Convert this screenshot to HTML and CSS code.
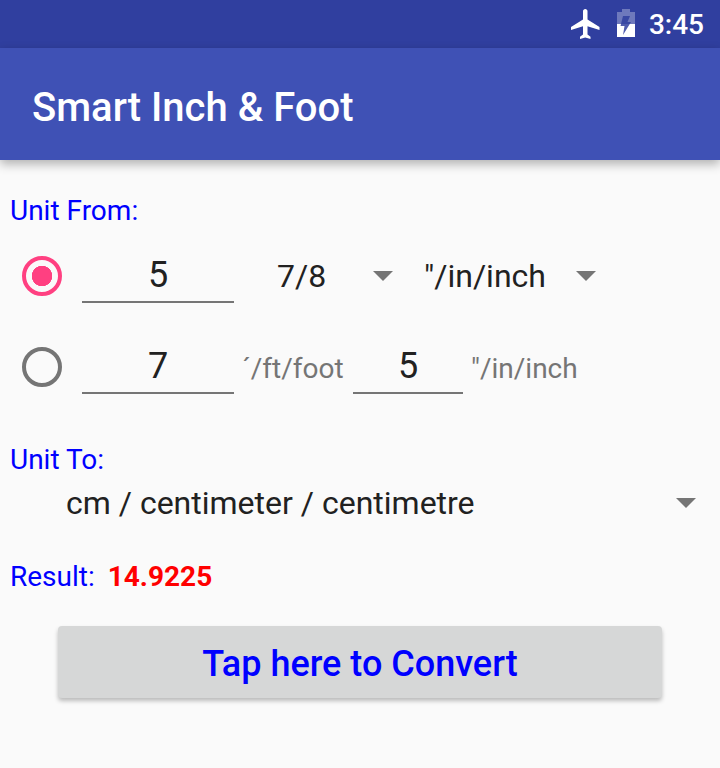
FILE: index.html
```html
<!DOCTYPE html>
<html lang="en">
<head>
  <meta charset="UTF-8">
  <meta name="viewport" content="width=device-width, initial-scale=1.0">
  <title>Smart Inch &amp; Foot</title>
  <link rel="stylesheet" href="styles.css">
</head>
<body>

  <!-- Status bar -->
  <div class="status-bar">
    <svg class="plane" viewBox="0 0 24 24"><path d="M21 16v-2l-8-5V3.500C13 2.670 12.330 2 11.500 2S10 2.670 10 3.500V9l-8 5v2l8-2.500V19l-2 1.500V22l3.500-1 3.500 1v-1.500L13 19v-5.500l8 2.500z"/></svg>
    <svg class="battery" viewBox="0 0 20 28">
      <path class="battery-empty" d="M6 0h8v3h5v25H1V3h5z"/>
      <path d="M1 15h18v13H1z"/>
      <path class="battery-bolt" d="M7 7h7l-2.500 6H15L7 26l1.500-9H4.500z"/>
    </svg>
    <span class="clock">3:45</span>
  </div>

  <!-- App bar -->
  <div class="app-bar">Smart Inch &amp; Foot</div>

  <div class="content">
    <div class="label">Unit From:</div>

    <div class="row row-first">
      <span class="radio radio-on"></span>
      <span class="field field-wide">5</span>
      <span class="spinner spinner-fraction">7/8<i class="arrow"></i></span>
      <span class="spinner spinner-unit">"/in/inch<i class="arrow"></i></span>
    </div>

    <div class="row row-second">
      <span class="radio"></span>
      <span class="field field-wide">7</span>
      <span class="unit">´/ft/foot</span>
      <span class="field field-small">5</span>
      <span class="unit">"/in/inch</span>
    </div>

    <div class="label label-to">Unit To:</div>
    <div class="spinner spinner-to">cm / centimeter / centimetre<i class="arrow"></i></div>

    <div class="label label-result">Result: <b class="result">14.9225</b></div>

    <button class="button">Tap here to Convert</button>
  </div>

</body>
</html>
```

FILE: styles.css
```css
body {
  margin: 0;
  height: 768px;
  overflow: hidden;
  background: #fafafa;
  font-family: Roboto, sans-serif;
  color: #212121;
}

/* Status bar */
.status-bar {
  height: 48px;
  background: #303f9f;
  display: flex;
  align-items: center;
  justify-content: flex-end;
  padding-right: 16px;
  color: #fff;
}

.plane {
  width: 36px;
  height: 36px;
  fill: #fff;
  margin-right: 12px;
}

.battery {
  width: 20px;
  height: 28px;
  fill: #fff;
  margin: 0 13px 2px 0;
}

.battery-empty {
  opacity: 0.3;
}

.battery-bolt {
  fill: #303f9f;
  opacity: 0.85;
}

.clock {
  font-size: 28px;
  font-weight: 500;
}

/* App bar */
.app-bar {
  height: 112px;
  background: #3f51b5;
  color: #fff;
  font-size: 40px;
  font-weight: 500;
  line-height: 120px;
  padding-left: 32px;
  box-shadow: 0 4px 10px rgba(0, 0, 0, 0.3);
  position: relative;
}

/* Form */
.content {
  padding: 34px 0 0 10px;
}

.label {
  font-size: 28px;
  line-height: 34px;
  color: #00f;
}

.row {
  display: flex;
  align-items: flex-start;
  height: 64px;
  padding-left: 12px;
}

.row-first {
  margin-top: 21px;
}

.row-second {
  margin-top: 27px;
}

.radio {
  box-sizing: border-box;
  width: 40px;
  height: 40px;
  margin-top: 7px;
  border: 4px solid #757575;
  border-radius: 50%;
  flex: none;
}

.radio-on {
  border-color: #ff4081;
  background: radial-gradient(circle, #ff4081 0 10px, transparent 10.5px);
}

.field {
  box-sizing: border-box;
  height: 54px;
  border-bottom: 2px solid #757575;
  font-size: 36px;
  line-height: 53px;
  text-align: center;
  flex: none;
}

.field-wide {
  width: 152px;
  margin-left: 20px;
}

.field-small {
  width: 110px;
  margin-left: 8px;
}

.spinner {
  position: relative;
  font-size: 32px;
  line-height: 55px;
  flex: none;
}

.arrow {
  position: absolute;
  top: 22px;
  width: 0;
  height: 0;
  border-left: 10px solid transparent;
  border-right: 10px solid transparent;
  border-top: 10px solid #757575;
}

.spinner-fraction {
  width: 147px;
  margin-left: 43px;
}

.spinner-fraction .arrow {
  left: 96px;
}

.spinner-unit .arrow {
  left: 152px;
}

.unit {
  width: 103px;
  margin-left: 8px;
  font-size: 28px;
  line-height: 58px;
  white-space: nowrap;
  color: #757575;
  flex: none;
}

.label-to {
  margin-top: 39px;
}

.spinner-to {
  height: 50px;
  line-height: 50px;
  margin: 1px 0 0 56px;
}

.spinner-to .arrow {
  top: 20px;
  left: 610px;
}

.label-result {
  margin-top: 32px;
}

.result {
  margin-left: 6px;
  color: #f00;
  font-weight: 700;
}

.button {
  display: block;
  width: 604px;
  height: 72px;
  margin: 32px 0 0 48px;
  padding: 4px 0 0;
  border: none;
  border-radius: 4px;
  background: #d6d7d7;
  box-shadow: 0 3px 4px rgba(0, 0, 0, 0.25);
  color: #00f;
  font-family: Roboto, sans-serif;
  font-size: 36px;
  font-weight: 500;
}
```
